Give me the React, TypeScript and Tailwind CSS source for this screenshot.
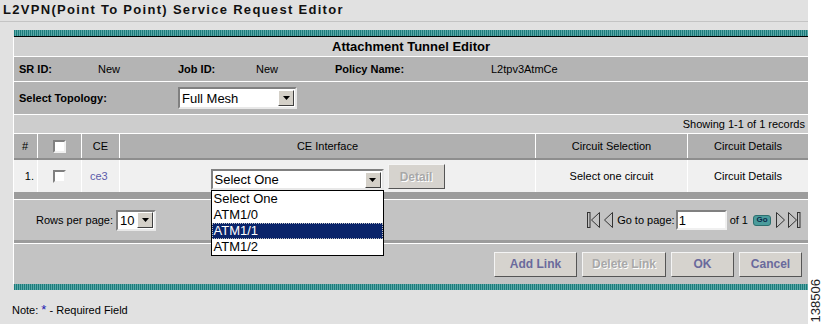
import React from "react";

const font = "font-['Liberation_Sans',Arial,sans-serif]";

function Arrow() {
  return (
    <div className="w-[16px] h-[16px] bg-[#d4d0c8] border border-t-white border-l-white border-r-[#404040] border-b-[#404040] flex items-center justify-center">
      <svg width="7" height="4" viewBox="0 0 7 4">
        <path d="M0 0H7L3.5 4Z" fill="#000" />
      </svg>
    </div>
  );
}

function Select({ w, h, text, size }: { w: string; h: string; text: string; size: string }) {
  return (
    <div className={`${w} ${h} bg-white border-2 border-t-[#808080] border-l-[#808080] border-r-[#e8e8e8] border-b-[#e8e8e8] flex items-center justify-between pr-[1px]`}>
      <span className={`${size} pl-[2px] text-black leading-none`}>{text}</span>
      <Arrow />
    </div>
  );
}

function Check() {
  return (
    <div className="w-[13px] h-[13px] bg-white border-2 border-t-[#808080] border-l-[#808080] border-r-[#f0f0f0] border-b-[#f0f0f0]" />
  );
}

function Btn({ w, label, disabled }: { w: string; label: string; disabled?: boolean }) {
  return (
    <div
      className={`${w} h-[25px] bg-[#d6d3ce] border border-t-[#f4f4f4] border-l-[#f4f4f4] border-r-[#555] border-b-[#555] flex items-center justify-center text-[12px] font-bold ${
        disabled ? "text-[#a8a8a8] [text-shadow:1px_1px_0_#ffffff]" : "text-[#6a6a9c]"
      }`}
    >
      {label}
    </div>
  );
}

function Teal() {
  return (
    <div className="h-[6px] bg-[repeating-linear-gradient(90deg,#1d7b7b_0px,#1d7b7b_1px,#5aa8a8_1px,#5aa8a8_2px)]" />
  );
}

function FirstIcon() {
  return (
    <svg width="13" height="16" viewBox="0 0 13 16">
      <rect x="0.5" y="0.5" width="2.5" height="15" fill="none" stroke="#333" />
      <path d="M12.5 0.5V15.5L4.5 8Z" fill="none" stroke="#333" />
    </svg>
  );
}
function PrevIcon() {
  return (
    <svg width="9" height="16" viewBox="0 0 9 16">
      <path d="M8.5 0.5V15.5L0.5 8Z" fill="none" stroke="#333" />
    </svg>
  );
}
function NextIcon() {
  return (
    <svg width="9" height="16" viewBox="0 0 9 16">
      <path d="M0.5 0.5V15.5L8.5 8Z" fill="none" stroke="#333" />
    </svg>
  );
}
function LastIcon() {
  return (
    <svg width="13" height="16" viewBox="0 0 13 16">
      <path d="M0.5 0.5V15.5L8.5 8Z" fill="none" stroke="#333" />
      <rect x="9.5" y="0.5" width="2.5" height="15" fill="none" stroke="#333" />
    </svg>
  );
}

export default function App() {
  return (
    <div className={`${font} w-[822px] h-[324px] bg-white flex text-black`}>
      <div className="w-[808px] h-full bg-[#e1e1e1] flex flex-col">
        <div className="h-[22px] border-b border-[#c4c4c4] pl-[3px] pt-[3px] text-[13px] font-bold tracking-[1.3px] leading-[14px] text-[#111]">
          L2VPN(Point To Point) Service Request Editor
        </div>
        <div className="pl-[13px] pt-[8px]">
          <div className="ml-[1px]">
            <Teal />
          </div>
          <div className="ml-[1px] h-[1px] bg-black" />
          <div className="border-l border-white">
            <div className="h-[20px] bg-[#d2d2d2] border-b border-white flex items-center justify-center text-[13px] font-bold">
              Attachment Tunnel Editor
            </div>
            <div className="h-[25px] bg-[#b4b4b4] border-b border-white flex items-center pl-[5px] text-[11px]">
              <div className="w-[79px] font-bold">SR ID:</div>
              <div className="w-[80px]">New</div>
              <div className="w-[78px] font-bold">Job ID:</div>
              <div className="w-[79px]">New</div>
              <div className="w-[156px] font-bold">Policy Name:</div>
              <div>L2tpv3AtmCe</div>
            </div>
            <div className="h-[33px] bg-[#b4b4b4] border-b border-white flex items-center pl-[5px] text-[11px]">
              <div className="w-[159px] font-bold">Select Topology:</div>
              <Select w="w-[119px]" h="h-[22px]" text="Full Mesh" size="text-[13px]" />
            </div>
            <div className="h-[19px] bg-[#cdcdcd] border-b border-white flex items-center justify-end pr-[3px] text-[11px]">
              Showing 1-1 of 1 records
            </div>
            <div className="h-[26px] bg-[#b0b0b0] border-b-2 border-[#8e8e8e] flex text-[11px]">
              <div className="w-[24px] border-r border-white flex items-center pl-[8px]">#</div>
              <div className="w-[44px] border-r border-white flex items-center justify-center">
                <Check />
              </div>
              <div className="w-[38px] border-r border-white flex items-center justify-center">CE</div>
              <div className="w-[416px] border-r border-white flex items-center justify-center">CE Interface</div>
              <div className="w-[152px] border-r border-white flex items-center justify-center">Circuit Selection</div>
              <div className="flex-1 flex items-center justify-center">Circuit Details</div>
            </div>
            <div className="h-[32px] bg-[#f0f0f0] flex text-[11px]">
              <div className="w-[24px] border-r border-white flex items-center justify-end pr-[3px]">1.</div>
              <div className="w-[44px] border-r border-white flex items-center justify-center">
                <Check />
              </div>
              <div className="w-[38px] border-r border-white flex items-center pl-[8px] text-[#5a5aaa]">ce3</div>
              <div className="w-[416px] border-r border-white flex items-start justify-center gap-[4px]">
                <div className="relative mt-[9px]">
                  <Select w="w-[173px]" h="h-[21px]" text="Select One" size="text-[13px]" />
                  <div className="absolute left-0 top-full w-[173px] bg-white border border-black z-10 text-[13px] leading-[16px]">
                    <div className="h-[16px] pl-[2px]">Select One</div>
                    <div className="h-[16px] pl-[2px]">ATM1/0</div>
                    <div className="h-[16px] pl-[2px] bg-[#0a246a] text-white outline-1 outline-dotted outline-[#c0c0c0] -outline-offset-1">ATM1/1</div>
                    <div className="h-[16px] pl-[2px]">ATM1/2</div>
                  </div>
                </div>
                <div className="mt-[4px] w-[57px] h-[25px] bg-[#d6d3ce] border border-t-[#f4f4f4] border-l-[#f4f4f4] border-r-[#555] border-b-[#555] flex items-center justify-center text-[12px] font-bold text-[#a8a8a8] [text-shadow:1px_1px_0_#ffffff]">
                  Detail
                </div>
              </div>
              <div className="w-[152px] border-r border-white flex items-center justify-center">Select one circuit</div>
              <div className="flex-1 flex items-center justify-center">Circuit Details</div>
            </div>
            <div className="h-[8px] bg-[#9c9c9c] border-b border-white" />
            <div className="h-[40px] bg-[#c3c3c3] flex items-center text-[11px]">
              <div className="pl-[22px] flex items-center gap-[3px] flex-1">
                <span>Rows per page:</span>
                <Select w="w-[40px]" h="h-[21px]" text="10" size="text-[13px]" />
              </div>
              <div className="flex items-center pr-[7px]">
                <FirstIcon />
                <div className="w-[4px]" />
                <PrevIcon />
                <span className="ml-[4px] mr-[1px]">Go to page:</span>
                <div className="w-[51px] h-[20px] bg-white border-2 border-t-[#808080] border-l-[#808080] border-r-[#f0f0f0] border-b-[#f0f0f0] text-[13px] leading-none pl-[1px] flex items-center">1</div>
                <span className="ml-[3px]">of 1</span>
                <div className="ml-[5px] w-[18px] h-[11px] rounded-[3px] bg-[#4a9c9c] border border-[#2c6f6f] flex items-center justify-center text-[8px] font-bold text-[#0c2a4a] leading-none">Go</div>
                <div className="w-[5px]" />
                <NextIcon />
                <div className="w-[3px]" />
                <LastIcon />
              </div>
            </div>
            <div className="h-[4px] bg-[#9c9c9c] border-b border-white" />
            <div className="h-[40px] bg-[#c3c3c3] flex items-center justify-end gap-[5px] pr-[6px]">
              <Btn w="w-[83px]" label="Add Link" />
              <Btn w="w-[84px]" label="Delete Link" disabled />
              <Btn w="w-[63px]" label="OK" />
              <Btn w="w-[63px]" label="Cancel" />
            </div>
          </div>
          <div className="ml-[1px]">
            <Teal />
          </div>
        </div>
        <div className="pl-[12px] pt-[10px] text-[11px]">
          Note: <span className="text-[#1a1ab0] text-[13px]">*</span> - Required Field
        </div>
      </div>
      <div className="flex-1 flex flex-col justify-end items-center pb-[2px]">
        <div className="[writing-mode:vertical-rl] rotate-180 text-[13px] leading-none text-[#222]">138506</div>
      </div>
    </div>
  );
}
